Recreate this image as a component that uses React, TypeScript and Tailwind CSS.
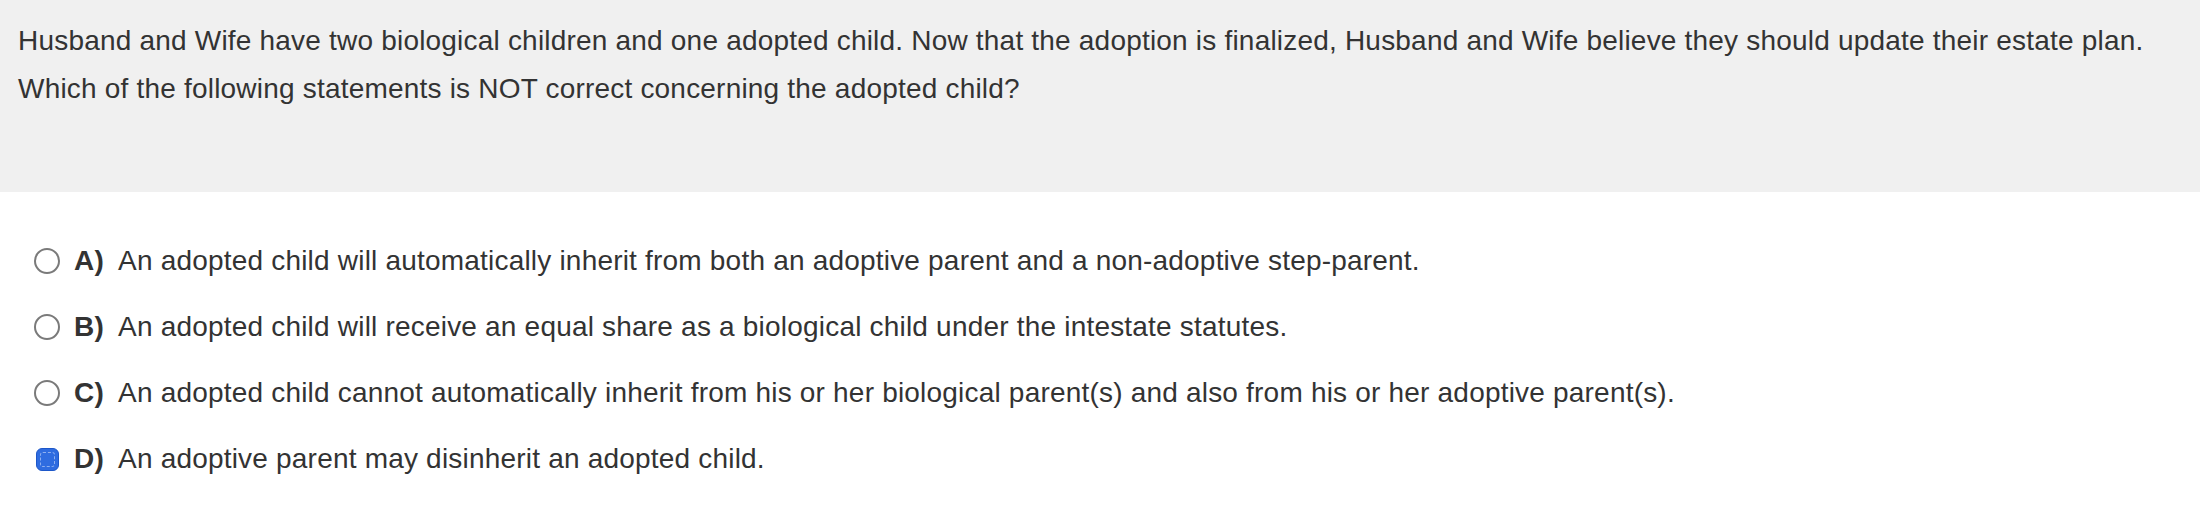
import React from 'react';

const options = [
  { key: 'A', text: 'An adopted child will automatically inherit from both an adoptive parent and a non-adoptive step-parent.' },
  { key: 'B', text: 'An adopted child will receive an equal share as a biological child under the intestate statutes.' },
  { key: 'C', text: 'An adopted child cannot automatically inherit from his or her biological parent(s) and also from his or her adoptive parent(s).' },
  { key: 'D', text: 'An adoptive parent may disinherit an adopted child.' },
];

const Radio: React.FC<{ checked: boolean }> = ({ checked }) =>
  checked ? (
    <span className="flex h-[23px] w-[23px] items-center justify-center rounded-[6px] border border-[#1d57c9] bg-[#2f6ce0]">
      <span className="h-[15px] w-[15px] rounded-[3px] border border-dashed border-[#8fb0f0]" />
    </span>
  ) : (
    <span className="block h-[26px] w-[26px] rounded-full border-2 border-[#7a7a7a] bg-white" />
  );

const App: React.FC = () => {
  const selected = 'D';
  return (
    <div className="min-h-screen bg-white text-[#333333] font-['Liberation_Sans',Arial,sans-serif] text-[28px] leading-[48px] tracking-[0.2px]">
      <div className="h-[192px] bg-[#f0f0f0] px-[18px] pt-[17px]">
        <p>
          Husband and Wife have two biological children and one adopted child. Now that the adoption is finalized, Husband and Wife believe they should update their estate plan.
        </p>
        <p>Which of the following statements is NOT correct concerning the adopted child?</p>
      </div>

      <div className="flex flex-col gap-[18px] pt-[45px] pl-[34px]">
        {options.map(o => (
          <label key={o.key} className="flex items-center">
            <span className="flex w-[26px] justify-center">
              <Radio checked={o.key === selected} />
            </span>
            <span className="ml-[14px] w-[44px] font-bold">{o.key})</span>
            <span>{o.text}</span>
          </label>
        ))}
      </div>
    </div>
  );
};

export default App;
